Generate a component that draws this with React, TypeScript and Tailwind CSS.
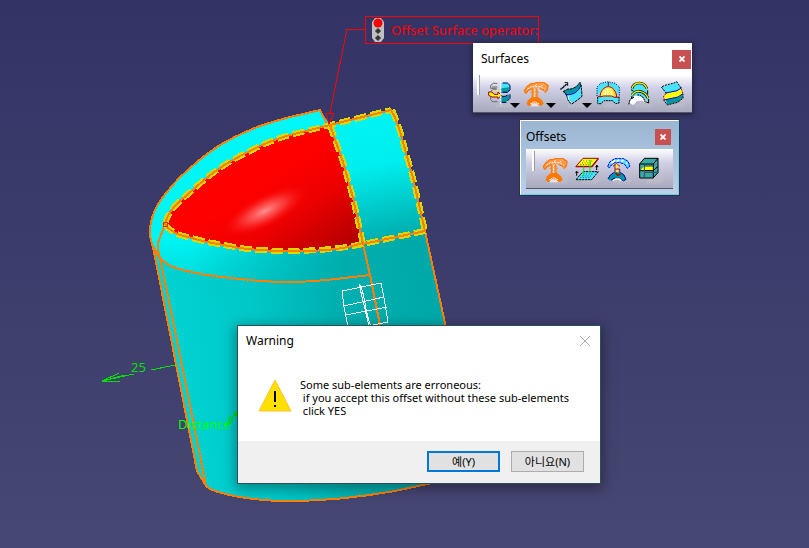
import type { ReactNode } from "react";
import clsx from "clsx";

const EDGE = "#ff8000";
const MARK = "#d9d900";

const RED_FACE =
  "M165 224 C168 212 176 204 187 195 C197 186 208 176 220 168 C230 161 240 156 250 151 C263 144 276 139 290 135 L330 125 L343 162 L353 198 L363 243 C350 247 339 249 327 250 C314 251 300 251 287 251 C271 251 255 250 240 248 L207 242 L180 235 C172 232 168 229 165 224 Z";
const CAP_FACE =
  "M330 125 L391 110 C396 118 400 130 403 142 L413 178 L425 231 L363 244 L353 198 L343 162 Z";

function Scene() {
  return (
    <svg
      className="absolute top-0 left-0"
      width="809"
      height="548"
      viewBox="0 0 809 548"
      fill="none"
    >
      <defs>
        <linearGradient id="dome" x1="250" y1="110" x2="262" y2="300" gradientUnits="userSpaceOnUse">
          <stop offset="0" stopColor="#00f8f8" />
          <stop offset="0.65" stopColor="#00f4f4" />
          <stop offset="1" stopColor="#00cccc" />
        </linearGradient>
        <linearGradient id="body" x1="165" y1="300" x2="440" y2="260" gradientUnits="userSpaceOnUse">
          <stop offset="0" stopColor="#00d2d2" />
          <stop offset="0.3" stopColor="#00c8c8" />
          <stop offset="0.6" stopColor="#00b0b0" />
          <stop offset="1" stopColor="#00a8a8" />
        </linearGradient>
        <linearGradient id="rim" x1="190" y1="0" x2="345" y2="0" gradientUnits="userSpaceOnUse">
          <stop offset="0" stopColor="#00a8a8" stopOpacity="0" />
          <stop offset="1" stopColor="#00acac" />
        </linearGradient>
        <linearGradient id="cap" x1="358" y1="118" x2="384" y2="240" gradientUnits="userSpaceOnUse">
          <stop offset="0" stopColor="#00f4f4" />
          <stop offset="0.4" stopColor="#00eeee" />
          <stop offset="1" stopColor="#00adad" />
        </linearGradient>
        <linearGradient id="red" x1="265" y1="175" x2="325" y2="262" gradientUnits="userSpaceOnUse">
          <stop offset="0" stopColor="#ff0000" />
          <stop offset="0.45" stopColor="#ee0000" />
          <stop offset="1" stopColor="#b40000" />
        </linearGradient>
        <radialGradient id="shine">
          <stop offset="0" stopColor="#ff9090" />
          <stop offset="0.45" stopColor="#ff5050" stopOpacity="0.7" />
          <stop offset="1" stopColor="#ff0000" stopOpacity="0" />
        </radialGradient>
      </defs>

      {/* solid */}
      <path
        d="M150 233 C150 226 151 220 153 215 C156 206 161 199 167 192 C173 184 181 176 190 168 C199 160 209 152 220 145 C230 139 240 134 250 130 C263 124 276 121 290 117 L320 110 L330 125 L391 110 L425 231 L460 395 C462 450 440 481 432 483 C420 487 407 489 395 491 C355 498 320 501 290 501 C260 501 235 497 218 492 C212 490 208 488 206 486 L197 471 L153 247 Z"
        fill="url(#body)"
      />
      <path
        d="M150 233 C150 226 151 220 153 215 C156 206 161 199 167 192 C173 184 181 176 190 168 C199 160 209 152 220 145 C230 139 240 134 250 130 C263 124 276 121 290 117 L320 110 L330 125 L363 244 L370 275 C340 280 315 282 290 282 C255 282 230 280 207 275 C185 271 163 264 157 254 C154 248 150 241 150 233 Z"
        fill="url(#dome)"
      />
      <path
        d="M180 235 L240 248 L363 243 L370 275 C340 280 315 282 290 282 C255 282 230 280 190 271 Z"
        fill="url(#rim)"
      />
      <path d={CAP_FACE} fill="url(#cap)" />
      <path d={RED_FACE} fill="url(#red)" />
      <ellipse cx="265" cy="211" rx="48" ry="17" transform="rotate(-27 265 211)" fill="url(#shine)" />

      {/* edges */}
      <g stroke={EDGE} strokeWidth="2" shapeRendering="crispEdges">
        <path d="M327 124 L320 110 L290 117 C276 121 263 124 250 130 C240 134 230 139 220 145 C209 152 199 160 190 168 C181 176 173 184 167 192 C161 199 156 206 153 215 C151 220 150 226 150 233 C150 238 151 242 153 247 L197 471 L206 486 L177 340 L160 258 C158 252 157 248 158 243 L165 224" />
        <path d="M153 246 C156 256 165 264 173 267 C184 271 196 273 207 275 C220 277 230 278 240 279 C257 281 273 282 290 282 C303 282 315 281 327 280 L370 275" />
        <path d="M206 486 C208 488 212 490 218 492 C235 497 260 501 290 501 C320 501 355 498 395 491 L432 483" />
        <path d="M363 244 L370 275 L384 345" />
        <path d="M425 231 L453 360" />
      </g>
      <g stroke={MARK} strokeWidth="6" strokeDasharray="12 4" shapeRendering="crispEdges">
        <path d="M165 224 C168 212 176 204 187 195 C197 186 208 176 220 168 C230 161 240 156 250 151 C263 144 276 139 290 135 L330 125 L391 110" />
        <path d="M392 110 C396 118 400 130 403 142 L413 178 L425 231" />
        <path d="M330 125 L343 162 L353 198 L363 244" />
        <path d="M165 224 C168 229 172 232 180 235 L207 242 L240 248 C255 250 271 251 287 251 C314 251 340 249 363 244 L425 231" />
      </g>
      <g stroke={EDGE} strokeWidth="2" shapeRendering="crispEdges">
        <path d={RED_FACE} />
        <path d={CAP_FACE} />
      </g>
      <path d="M163 222 h4 v4 h-4 Z" stroke="#e03000" shapeRendering="crispEdges" />

      {/* axis symbol */}
      <g stroke="#ffffff" strokeWidth="1" shapeRendering="crispEdges">
        <path d="M342 291 L381 283 L384 298 L388 322 L368 326 M342 291 L344 307 L348 327 M344 306 L384 297 M346 315 L387 307 M359 284 L369 326 M359 284 C366 292 364 312 371 326" />
      </g>

      {/* leader to the operator label */}
      <g stroke="#ff0000" shapeRendering="crispEdges">
        <path d="M365 29 H347 L330 113" />
        <path d="M326 113 H334 L329 124 Z" />
      </g>

      {/* distance handle */}
      <g stroke="#00e000" shapeRendering="crispEdges">
        <path d="M175 365 L151 370 M134 374 L102 381 L119 373 M102 381 H120 M102 381 L125 375" />
        <path d="M234 415 L227 424 M231 416 L228 420 M233 419 L229 425" />
      </g>
      <circle cx="236" cy="414" r="2.500" fill="#00e000" />
    </svg>
  );
}

function TrafficLight() {
  return (
    <svg width="12" height="24" viewBox="0 0 12 24">
      <path d="M3 0h6l3 4v16l-3 4H3l-3-4V4Z" fill="#c0c0c0" />
      <circle cx="6" cy="5" r="4.5" fill="#ff0000" />
      <path d="M6 10.500l2.500 2.500-2.500 2.500-2.500-2.500Z M6 17.500l2.500 2.500-2.500 2.500-2.500-2.500Z" fill="#333" stroke="#333" />
    </svg>
  );
}

// Toolbar icons share a 72x78 grid and are drawn at 24x26
function Icon({ children }: { children: ReactNode }) {
  return (
    <svg
      width="24"
      height="26"
      viewBox="0 0 72 78"
      fill="none"
      strokeWidth="3"
      className="shrink-0 overflow-visible"
      aria-hidden="true"
    >
      <path
        d="M22 74h50M28 70h48M36 66h39M46 62h28M54 58h18M62 54h8M24 78h44"
        stroke="#c2c2cc"
        strokeDasharray="3 3"
      />
      {children}
    </svg>
  );
}

function ExtrudeIcon() {
  return (
    <Icon>
      <path d="M28 7H16l-8 6v9h18M28 18H12M26 26H14l-6 6M28 62H14l-6-6v-8" stroke="#6b6b6b" />
      <path d="M40 6h18l8 7v8l-8 5H40Z" fill="#48e4ff" />
      <path d="M40 22l24-3v9l-8 8H40Z" fill="#0097a0" />
      <path d="M40 46h10l14-6v12l-8 8v6H40Z" fill="#0097a0" />
      <path d="M44 6h14l8 7v14l-8 7H44M66 40v12l-8 8M42 46h10l6-4M42 64h12" stroke="#000060" />
      <path d="M2 33h10l6 7h12v-7l10 10-10 10v-5H12L2 43Z" fill="#ffff00" stroke="#a80000" />
      <path d="M16 28h22" stroke="#ffff00" strokeDasharray="6 3" />
      <path d="M38 0v74" stroke="#ffffff" strokeDasharray="6 3" />
    </Icon>
  );
}

function OffsetIcon() {
  return (
    <Icon>
      <path
        d="M2 26L8 17 22 7h38l12 7-2 12-7 9-8-9-12-5H27l-13 6-9 9Z"
        fill="#ff9a4d"
      />
      <path
        d="M5 37l-4-8 8-12 12-9h10l5-3h24l12 8-2 13-7 9M60 28l-12-6M26 23l-14 6-6 8"
        stroke="#ff7800"
        strokeWidth="4"
      />
      <path d="M10 25l12-8h26l14 7M34 15l4-6M50 16l8-6" stroke="#fff" strokeDasharray="6 3" />
      <path d="M25 22h14v32H25Z" fill="#ff9a4d" />
      <path d="M25 22v32M39 22v32M20 36l5-5M44 36l-5-5" stroke="#ff7800" />
      <path d="M32 25v26" stroke="#fff" strokeDasharray="6 3" />
      <path d="M8 68l4-10 12-10h18l12 10 5 10-6 6H12Z" fill="#ff7800" />
      <path d="M19 76l6-9h14l7 9Z" fill="#e8e4ee" />
      <path d="M19 68h5l3-5h10l4 5h4" stroke="#fff" strokeDasharray="5 2" />
    </Icon>
  );
}

function SweepIcon() {
  return (
    <Icon>
      <path d="M0 24h6v-4h5v-5h5v-4h6M14 5h9v9" stroke="#000" />
      <path d="M9 32L24 24c16 2 28-8 36-20l5 12c-8 16-20 24-40 25Z" fill="#0097a0" />
      <path d="M16 40c24 4 39-8 47-27l3 30-12 12-20 12-9-8Z" fill="#48e4ff" />
      <path d="M16 40c24 4 39-8 47-27" stroke="#0000c8" />
      <path d="M9 32L24 24c16 2 28-8 36-20l4 12 2 30-12 10-19 13-9-8-8-23Z" stroke="#000" strokeDasharray="9 2" />
      <path d="M24 45l3 12M30 60l4 5" stroke="#fff" />
    </Icon>
  );
}

function FillIcon() {
  return (
    <Icon>
      <path d="M3 45V18L14 7l22-5 22 5 12 11v27L56 24 37 16 18 26Z" fill="#48e4ff" />
      <path d="M3 45V18L14 7l22-5 22 5 12 11v27" stroke="#000060" strokeDasharray="3 4" />
      <path d="M14 47c0-18 12-29 23-29s23 11 23 29Z" fill="#fff04a" />
      <path d="M28 28v16M35 24v18M46 30v12" stroke="#fff" strokeWidth="4" strokeDasharray="6 2" />
      <path d="M48 22c6 7 9 17 9 24" stroke="#ffb300" />
      <path d="M12 49c0-19 13-32 25-32s25 13 25 32Z" stroke="#a01010" />
      <path d="M37 3v13" stroke="#a01010" />
      <path d="M3 48h67v18l-10 2-10-8H22l-9 8H4Z" fill="#48e4ff" />
      <path d="M5 48v19M69 47v19l-10 2-10-9H24l-9 9H5" stroke="#000" strokeDasharray="6 2" />
      <path d="M5 47h10l8-2h24l8 4h14" stroke="#a01010" />
    </Icon>
  );
}

function MultiSectionIcon() {
  return (
    <Icon>
      <path d="M9 24C12 10 24 4 35 4s23 10 24 24l4 36-12-13-22-9-17 9Z" fill="#48e4ff" />
      <path d="M5 65c4-17 16-22 25-20 10 0 20 9 22 21l-9-7H28l-12 13Z" fill="#fff" />
      <path d="M12 22C16 9 25 6 34 6c11 0 19 6 23 17M12 42c7-9 14-12 22-11 13 1 21 8 26 20" stroke="#000" strokeWidth="8" />
      <path d="M12 22C16 9 25 6 34 6c11 0 19 6 23 17M12 42c7-9 14-12 22-11 13 1 21 8 26 20" stroke="#f4ef00" strokeWidth="4" />
      <path d="M9 26l8 5M59 28v12M62 54v12l-7-3M12 45l-2 7 5-1" stroke="#000" />
      <path d="M2 70l4-13 8-8h4M28 42h8l10 8 6 14" stroke="#000" strokeDasharray="6 2" />
    </Icon>
  );
}

function BlendIcon() {
  return (
    <Icon>
      <path d="M4 18L42 7l8-5 14 20-10 8-35 7Z" fill="#48e4ff" />
      <path d="M19 36l33-6 12-9 5 19-12 9-42 8-4-9Z" fill="#ffff00" />
      <path d="M17 56l38-7 14-10-1 13-15 12-31 7Z" fill="#0097a0" />
      <path d="M17 36l34-7 14-9M12 57l42-9 15-10" stroke="#0000d8" />
      <path d="M19 37L4 18l11-5 27-7 8-4 14 20M10 56l12 16 31-8 16-12V39" stroke="#000" strokeDasharray="6 3" />
      <path d="M64 23l5 16M18 37l-8 11 4 8" stroke="#a01010" strokeDasharray="6 3" />
    </Icon>
  );
}

function VariableOffsetIcon() {
  return (
    <Icon>
      <path d="M24 4h46L50 28H4Z" fill="#ffff20" />
      <path d="M24 4h46L50 28H3Z" stroke="#a80000" />
      <path d="M2 29h49L70 5" stroke="#a80000" strokeWidth="4" />
      <path d="M25 12h32M21 18h30M16 23h30" stroke="#707000" strokeDasharray="3 5" />
      <path d="M24 44h46L50 68H4Z" fill="#48e4ff" />
      <path d="M24 44h46L50 68H3Z" stroke="#000" strokeDasharray="7 2" />
      <path d="M25 51h32M21 57h30M16 62h30" stroke="#087078" strokeDasharray="3 5" />
      <path d="M26 28v29M45 8v38" stroke="#00f000" />
      <path d="M5 56V42M1 46h9M65 24v15M61 29h9M63 26h5" stroke="#000" />
    </Icon>
  );
}

function RoughOffsetIcon() {
  return (
    <Icon>
      <path d="M2 29l6-14 15-10h27l13 8 6 14-8 7-8-12-16-6H25l-12 8-5 8Z" fill="#48e4ff" />
      <path d="M2 29l6-14 15-10h27l13 8 6 14-8 7-8-12-16-6H25l-12 8-5 8Z" stroke="#0000d8" strokeDasharray="9 2" />
      <path d="M13 18l12-8M29 14l8-6M43 14l6-5M56 20l5-3" stroke="#fff" strokeWidth="5" />
      <path d="M18 28l10-9 11 9M24 23v27M25 36h13v14" stroke="#a01010" />
      <path d="M29 22v12M30 40v10" stroke="#ffff00" strokeWidth="5" />
      <path d="M3 66l7-12 12-8h16l13 8 6 13-8 5-10-7H18l-9 6Z" fill="#0097a0" />
      <path d="M3 66l7-12 12-8M40 46l11 8 6 13-8 5M12 70l9-6h17l9 7" stroke="#0000a0" />
      <path d="M26 48l6 7 9-4" stroke="#a01010" strokeWidth="5" />
      <path d="M19 71l7-5h10l7 5" stroke="#fff" strokeWidth="4" />
    </Icon>
  );
}

function MidSurfaceIcon() {
  return (
    <Icon>
      <path d="M2 21L16 4h41v44L43 63H2Z" fill="#36aaa8" />
      <path d="M17 22h38v8H43v20H12V38Z" fill="#5a929c" opacity=".6" />
      <path d="M4 40l12-12h29L42 40Z" fill="#ffff00" />
      <path d="M2 21h41v42H2ZM2 21L16 4h41v43L43 62M43 21L57 4M2 41h41l14-13" stroke="#000" />
      <path d="M16 23v38M18 46h38M17 27h27" stroke="#305060" />
    </Icon>
  );
}

type Tool = { name: string; icon: ReactNode; menu?: boolean };

const surfaceTools: Tool[] = [
  { name: "Extrude", icon: <ExtrudeIcon />, menu: true },
  { name: "Offset", icon: <OffsetIcon />, menu: true },
  { name: "Sweep", icon: <SweepIcon />, menu: true },
  { name: "Fill", icon: <FillIcon /> },
  { name: "Multi-sections Surface", icon: <MultiSectionIcon /> },
  { name: "Blend", icon: <BlendIcon /> },
];

const offsetTools: Tool[] = [
  { name: "Offset", icon: <OffsetIcon /> },
  { name: "Variable Offset", icon: <VariableOffsetIcon /> },
  { name: "Rough Offset", icon: <RoughOffsetIcon /> },
  { name: "Mid Surface", icon: <MidSurfaceIcon /> },
];

function ToolRow({ tools, className }: { tools: Tool[]; className?: string }) {
  return (
    <div
      className={clsx(
        "flex items-start border-b border-[#54546a] bg-linear-to-b from-white via-[#d0d0e6] via-35% to-[#a9a9bd]",
        className,
      )}
    >
      <span className="mr-2 h-5 w-[3px] shrink-0 border-r border-[#9a9aa8] bg-white" />
      {tools.map((tool) => (
        <button
          key={tool.name}
          aria-label={tool.name}
          className={clsx("relative mt-1.5", tool.menu ? "mr-3" : "mr-2")}
        >
          {tool.icon}
          {tool.menu && (
            <span className="absolute -right-2 -bottom-px border-x-5 border-t-5 border-x-transparent border-t-black" />
          )}
        </button>
      ))}
    </div>
  );
}

function CloseButton({ className }: { className?: string }) {
  return (
    <button
      aria-label="Close"
      className={clsx("flex items-center justify-center bg-[#c75050] text-white", className)}
    >
      <svg width="6" height="6" viewBox="0 0 6 6" stroke="currentColor" strokeWidth="1.8">
        <path d="M0.500 0.500l5 5M5.500 0.500l-5 5" />
      </svg>
    </button>
  );
}

export default function App() {
  return (
    <main className="relative min-h-screen overflow-hidden bg-linear-to-b from-[#333366] to-[#474773] font-['Noto_Sans','Noto_Sans_CJK_KR',sans-serif] text-black">
      <Scene />

      <div className="absolute top-4 left-[365px] flex h-7 items-center gap-[7px] border border-[#ff0000] pl-1.5 text-[13px] whitespace-nowrap text-[#ff0000]">
        <TrafficLight />
        <span className="pt-0.5">Offset Surface operator:</span>
      </div>
      <span className="absolute top-[358px] left-[131px] text-[13px] text-[#00e000]">25</span>
      <span className="absolute top-[415px] left-[178px] text-[13px] text-[#00ff00]">Distance</span>

      <section className="absolute top-[43px] left-[473px] w-[219px] bg-white shadow-[0_1px_5px_1px_rgba(0,0,0,0.4)]">
        <header className="flex h-8 items-center justify-between pr-px pl-2 text-xs">
          <h2>Surfaces</h2>
          <CloseButton className="h-[19px] w-[19px]" />
        </header>
        <ToolRow tools={surfaceTools} className="h-[38px] pl-1" />
      </section>

      <section className="absolute top-[119px] left-[519px] w-[161px] border border-[#30303c] bg-linear-to-b from-[#9bb5d1] to-[#b9d1ea]">
        <div className="border border-t-white border-r-[#5fd4f4] border-b-[#5fd4f4] border-l-white px-[5px] pb-[5px]">
          <header className="flex h-7 items-center justify-between pt-1 pr-0.5 text-xs">
            <h2>Offsets</h2>
            <CloseButton className="h-4 w-4" />
          </header>
          <ToolRow tools={offsetTools} className="h-10 pt-0.5 pl-1.5" />
        </div>
      </section>

      <section
        role="dialog"
        aria-labelledby="warning-title"
        className="absolute top-[325px] left-[237px] w-[364px] border border-[#28505a] bg-white shadow-[0_3px_12px_2px_rgba(0,0,0,0.35)]"
      >
        <header className="flex h-[30px] items-center justify-between pr-2.5 pl-2 text-xs">
          <h2 id="warning-title">Warning</h2>
          <button aria-label="Close dialog">
            <svg width="10" height="10" viewBox="0 0 10 10" stroke="#aaaaaa">
              <path d="M0 0l10 10M10 0L0 10" />
            </svg>
          </button>
        </header>
        <div className="flex gap-2 px-5 pt-[22px] pb-6">
          <svg width="34" height="34" viewBox="0 0 34 34" className="shrink-0">
            <path d="M17 2L33 33H1Z" fill="#ffe000" stroke="#ffc22c" strokeLinejoin="round" />
            <path d="M16 13h2v11h-2zM16 27h2v2h-2z" fill="#000" />
          </svg>
          <p className="text-[11px] leading-[13px] whitespace-pre">
            {"Some sub-elements are erroneous:\n if you accept this offset without these sub-elements\n click YES"}
          </p>
        </div>
        <footer className="flex justify-end gap-[11px] bg-[#f0f0f0] px-4 pt-2.5 pb-[11px] text-[11px] leading-4">
          <button className="h-[21px] w-[73px] border-2 border-[#0078d7] bg-[#e1e1e1]">예(Y)</button>
          <button className="h-[21px] w-[73px] border border-[#adadad] bg-[#e1e1e1]">아니요(N)</button>
        </footer>
      </section>
    </main>
  );
}
